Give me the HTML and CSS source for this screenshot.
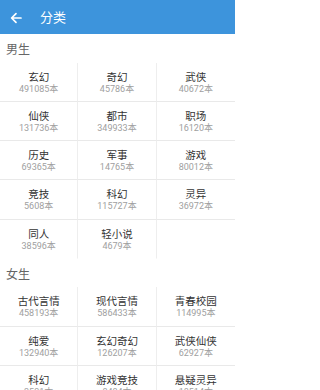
FILE: index.html
```html
<!DOCTYPE html>
<html lang="zh">
<head>
<meta charset="utf-8">
<meta name="viewport" content="width=device-width, initial-scale=1">
<link rel="stylesheet" href="styles.css">
</head>
<body>
<div class="page">
<header class="topbar">
  <svg class="back" width="12" height="12" viewBox="0 0 12 12"><path d="M11 6H1.8M6 1.6L1.6 6L6 10.4" fill="none" stroke="#fff" stroke-width="1.7" stroke-linecap="round" stroke-linejoin="round"/></svg>
  <span class="title">分类</span>
</header>
<section>
  <div class="sec-title">男生</div>
  <div class="grid">
    <div class="cell"><div class="name">玄幻</div><div class="num">491085本</div></div>
    <div class="cell"><div class="name">奇幻</div><div class="num">45786本</div></div>
    <div class="cell"><div class="name">武侠</div><div class="num">40672本</div></div>
    <div class="cell"><div class="name">仙侠</div><div class="num">131736本</div></div>
    <div class="cell"><div class="name">都市</div><div class="num">349933本</div></div>
    <div class="cell"><div class="name">职场</div><div class="num">16120本</div></div>
    <div class="cell"><div class="name">历史</div><div class="num">69365本</div></div>
    <div class="cell"><div class="name">军事</div><div class="num">14765本</div></div>
    <div class="cell"><div class="name">游戏</div><div class="num">80012本</div></div>
    <div class="cell"><div class="name">竞技</div><div class="num">5608本</div></div>
    <div class="cell"><div class="name">科幻</div><div class="num">115727本</div></div>
    <div class="cell"><div class="name">灵异</div><div class="num">36972本</div></div>
    <div class="cell last"><div class="name">同人</div><div class="num">38596本</div></div>
    <div class="cell last"><div class="name">轻小说</div><div class="num">4679本</div></div>
  </div>
</section>
<section>
  <div class="sec-title">女生</div>
  <div class="grid">
    <div class="cell"><div class="name">古代言情</div><div class="num">458193本</div></div>
    <div class="cell"><div class="name">现代言情</div><div class="num">586433本</div></div>
    <div class="cell"><div class="name">青春校园</div><div class="num">114995本</div></div>
    <div class="cell"><div class="name">纯爱</div><div class="num">132940本</div></div>
    <div class="cell"><div class="name">玄幻奇幻</div><div class="num">126207本</div></div>
    <div class="cell"><div class="name">武侠仙侠</div><div class="num">62927本</div></div>
    <div class="cell"><div class="name">科幻</div><div class="num">3531本</div></div>
    <div class="cell"><div class="name">游戏竞技</div><div class="num">8484本</div></div>
    <div class="cell"><div class="name">悬疑灵异</div><div class="num">18514本</div></div>
  </div>
</section>
</div>
</body>
</html>
```
FILE: styles.css
```css
html, body {
  margin: 0;
  padding: 0;
  background: #fff;
  font-family: Roboto, "Noto Sans CJK SC", sans-serif;
  overflow: hidden;
}
.page {
  width: 235px;
  height: 390px;
  overflow: hidden;
}
.topbar {
  height: 34px;
  background: #3d94dc;
  display: flex;
  align-items: center;
  padding-left: 10px;
  box-sizing: border-box;
}
.back {
  display: block;
  margin-top: 1px;
}
.title {
  color: #fff;
  font-size: 13px;
  margin-left: 18px;
  line-height: 1;
}
.sec-title {
  padding: 10px 6px 6.5px;
  font-size: 12px;
  line-height: 12px;
  color: #666;
}
.grid {
  display: grid;
  grid-template-columns: repeat(3, 1fr);
}
.cell {
  padding: 8px 0 6.3px;
  border-bottom: 1px solid #e9e9e9;
  border-right: 1px solid #eeeeee;
  text-align: center;
}
.cell:nth-child(3n) {
  border-right: none;
}
.cell.last {
  border-bottom-color: transparent;
}
.name {
  font-size: 10.5px;
  line-height: 13px;
  color: #333;
}
.num {
  font-size: 9px;
  line-height: 11px;
  color: #a0a0a0;
}
```
